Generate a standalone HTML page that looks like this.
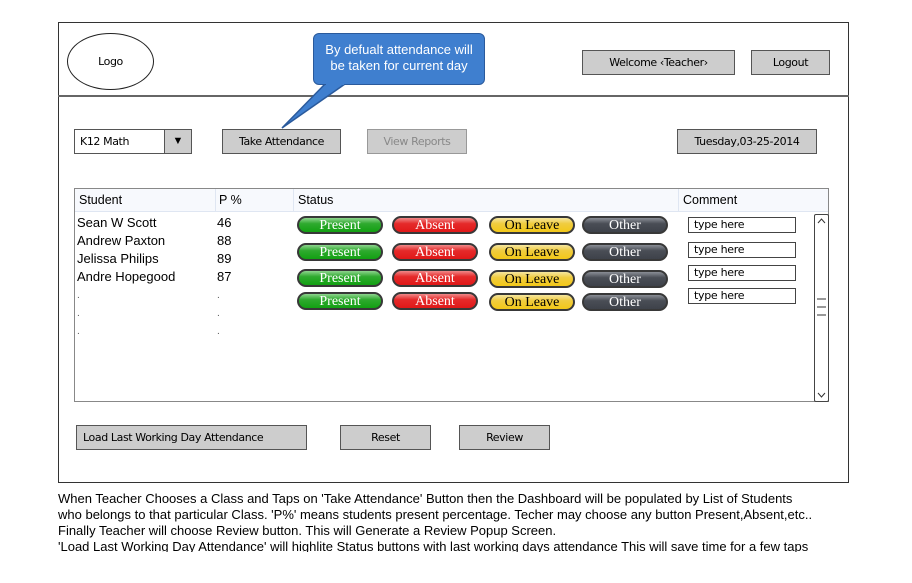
<!DOCTYPE html>
<html><head><meta charset="utf-8"><style>
*{box-sizing:border-box;margin:0;padding:0}
body{width:912px;height:583px;background:#fff;position:relative;overflow:hidden;font-family:"Liberation Sans",sans-serif;color:#000}
.a{position:absolute}
.sk{font-family:"DejaVu Sans",sans-serif;font-size:11px;letter-spacing:-0.4px}
.btn{position:absolute;background:#cdcdcd;border:1.5px solid #555;display:flex;align-items:center;justify-content:center}
.pill{position:absolute;width:86px;height:18px;border:2.5px solid #383838;border-radius:9px;font-family:"Liberation Serif",serif;font-size:14px;text-align:center;color:#fff;line-height:13px;padding-top:1px}
.g{background:linear-gradient(#8fd48f 0,#2faa2f 40%,#12a012 100%)}
.r{background:linear-gradient(#f08a8a 0,#e52a2a 40%,#e01818 100%)}
.y{background:linear-gradient(#f5e6a0 0,#f0cc40 40%,#f2c818 100%);color:#000}
.k{background:linear-gradient(#8a8e96 0,#4a4e56 40%,#3e424a 100%)}
.in{position:absolute;width:108px;height:16px;border:1.5px solid #444;font-family:"DejaVu Sans",sans-serif;font-size:11px;letter-spacing:-0.3px;padding-left:5px;line-height:13px}
.t{position:absolute;font-size:12.5px}
</style></head><body>
<div class="a" style="left:58px;top:22px;width:791px;height:461px;border:1px solid #333"></div>
<div class="a" style="left:58px;top:95px;width:791px;height:2px;background:#666"></div>
<div class="a sk" style="left:67px;top:33px;width:87px;height:57px;border:1.3px solid #222;border-radius:50%;display:flex;align-items:center;justify-content:center">Logo</div>
<svg class="a" style="left:270px;top:30px" width="220" height="110"><path d="M55 54 L12 98 L75 54" fill="#3f7fcf" stroke="#2a5a9c" stroke-width="1.5"/></svg>
<div class="a" style="left:313px;top:33px;width:172px;height:52px;background:#3f7fcf;border:1.5px solid #2a5a9c;border-radius:6px;color:#fff;font-size:13px;text-align:center;line-height:16px;padding-top:8px">By defualt attendance will<br>be taken for current day</div>
<svg class="a" style="left:270px;top:30px" width="220" height="110"><path d="M56 53.5 L74 53.5" stroke="#3f7fcf" stroke-width="3"/></svg>
<div class="btn sk" style="left:582px;top:50px;width:153px;height:25px">Welcome ‹Teacher›</div>
<div class="btn sk" style="left:751px;top:50px;width:79px;height:25px">Logout</div>
<div class="a sk" style="left:74px;top:129px;width:118px;height:25px;border:1.5px solid #555;background:#fff;padding:5px 0 0 5px">K12 Math</div>
<div class="a" style="left:164px;top:129px;width:28px;height:25px;border:1.5px solid #555;background:#cdcdcd;font-size:11px;text-align:center;line-height:22px">▼</div>
<div class="btn sk" style="left:222px;top:129px;width:119px;height:25px">Take Attendance</div>
<div class="btn sk" style="left:367px;top:129px;width:100px;height:25px;color:#888;border-color:#999">View Reports</div>
<div class="btn sk" style="left:677px;top:129px;width:140px;height:25px">Tuesday,03-25-2014</div>
<div class="a" style="left:74px;top:188px;width:755px;height:214px;border:1px solid #888"></div>
<div class="a" style="left:75px;top:189px;width:753px;height:23px;background:#f7f9fd;border-bottom:1px solid #dfe6f2"></div>
<div class="a" style="left:215px;top:189px;width:1px;height:23px;background:#dfe6f2"></div>
<div class="a" style="left:293px;top:189px;width:1px;height:23px;background:#dfe6f2"></div>
<div class="a" style="left:678px;top:189px;width:1px;height:23px;background:#dfe6f2"></div>
<div class="t" style="left:79px;top:193px">Student</div>
<div class="t" style="left:219px;top:193px">P %</div>
<div class="t" style="left:298px;top:193px">Status</div>
<div class="t" style="left:683px;top:193px">Comment</div>
<div class="t" style="left:77px;top:214px;line-height:18px;font-size:13px">Sean W Scott<br>Andrew Paxton<br>Jelissa Philips<br>Andre Hopegood</div>
<div class="t" style="left:217px;top:214px;line-height:18px;font-size:13px">46<br>88<br>89<br>87</div>
<div class="a" style="left:77px;top:287px;font-size:10px;line-height:18px;color:#555">.<br>.<br>.</div>
<div class="a" style="left:217px;top:287px;font-size:10px;line-height:18px;color:#555">.<br>.<br>.</div>
<div class="pill g" style="left:297px;top:216px">Present</div><div class="pill r" style="left:392px;top:216px">Absent</div><div class="pill y" style="left:489px;top:216px">On Leave</div><div class="pill k" style="left:582px;top:216px">Other</div>
<div class="pill g" style="left:297px;top:243px">Present</div><div class="pill r" style="left:392px;top:243px">Absent</div><div class="pill y" style="left:489px;top:243px">On Leave</div><div class="pill k" style="left:582px;top:243px">Other</div>
<div class="pill g" style="left:297px;top:269px">Present</div><div class="pill r" style="left:392px;top:269px">Absent</div><div class="pill y" style="left:489px;top:270px">On Leave</div><div class="pill k" style="left:582px;top:270px">Other</div>
<div class="pill g" style="left:297px;top:292px">Present</div><div class="pill r" style="left:392px;top:292px">Absent</div><div class="pill y" style="left:489px;top:293px">On Leave</div><div class="pill k" style="left:582px;top:293px">Other</div>
<div class="in" style="left:688px;top:217px">type here</div>
<div class="in" style="left:688px;top:242px">type here</div>
<div class="in" style="left:688px;top:265px">type here</div>
<div class="in" style="left:688px;top:288px">type here</div>
<div class="a" style="left:814px;top:214px;width:15px;height:188px;border:1.3px solid #444;border-radius:2px"></div>
<svg class="a" style="left:814px;top:214px" width="15" height="188"><path d="M4 9 L7.5 5 L11 9 M4 179 L7.5 183 L11 179 M3 85 H12 M3 93 H12 M3 101 H12" stroke="#333" fill="none" stroke-width="1"/></svg>
<div class="btn sk" style="left:76px;top:425px;width:231px;height:25px;justify-content:flex-start;padding-left:6px">Load Last Working Day Attendance</div>
<div class="btn sk" style="left:340px;top:425px;width:91px;height:25px">Reset</div>
<div class="btn sk" style="left:459px;top:425px;width:91px;height:25px">Review</div>
<div class="a" style="left:58px;top:491px;width:790px;height:61px;overflow:hidden;font-size:13px;line-height:16px;white-space:nowrap">When Teacher Chooses a Class and Taps on 'Take Attendance' Button then the Dashboard will be populated by List of Students<br>who belongs to that particular Class. 'P%' means students present percentage. Techer may choose any button Present,Absent,etc..<br>Finally Teacher will choose Review button. This will Generate a Review Popup Screen.<br>'Load Last Working Day Attendance' will highlite Status buttons with last working days attendance This will save time for a few taps</div>
</body></html>
